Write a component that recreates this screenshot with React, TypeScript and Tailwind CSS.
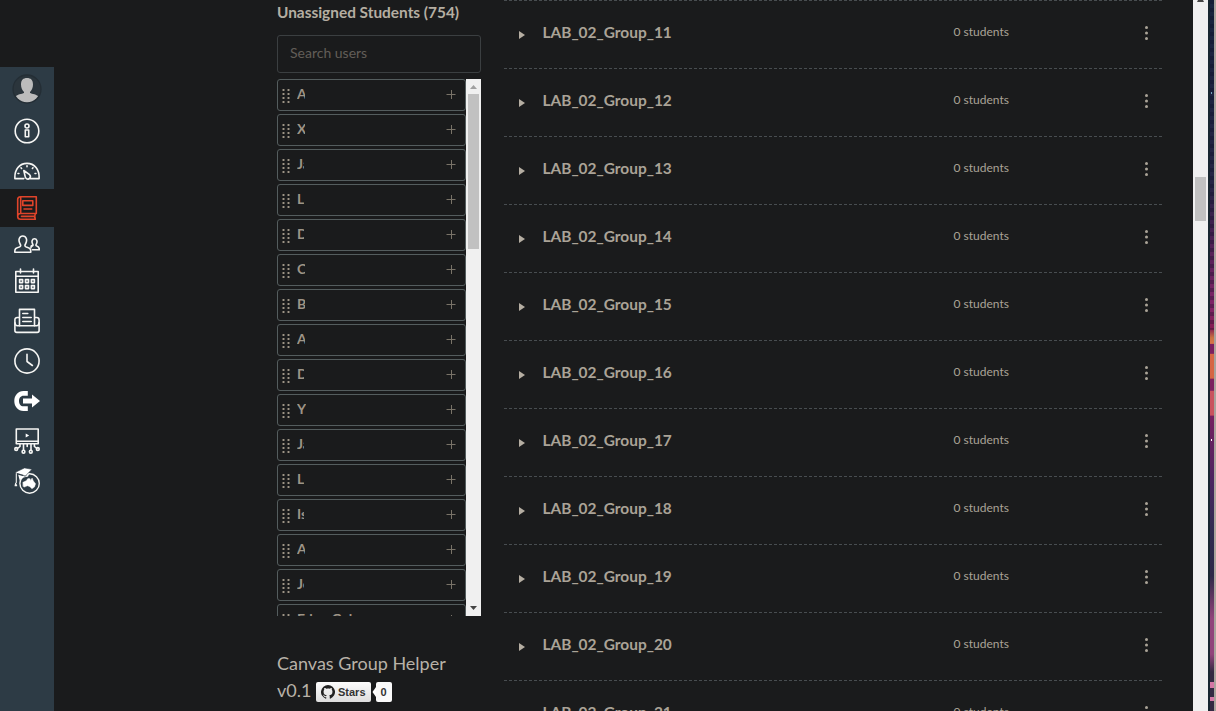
import type { ReactNode } from "react";

const students: [string, string][] = [
  ["A", "w-[8px]"], ["Xi", "w-[8px]"], ["Ja", "w-[7px]"], ["L", "w-[7px]"], ["D", "w-[7px]"],
  ["C", "w-[8px]"], ["B", "w-[8px]"], ["A", "w-[8px]"], ["D", "w-[7px]"], ["Y", "w-[9px]"],
  ["Ja", "w-[7px]"], ["L", "w-[7px]"], ["Is", "w-[7px]"], ["A", "w-[8px]"], ["Jo", "w-[7px]"],
  ["Eden Gal", "w-[58px]"],
];

const groups = [11, 12, 13, 14, 15, 16, 17, 18, 19, 20, 21];

function Icon({ children, red }: { children: ReactNode; red?: boolean }) {
  return (
    <svg
      width="26"
      height="26"
      viewBox="0 0 26 26"
      fill="none"
      strokeWidth="1.6"
      strokeLinejoin="round"
      strokeLinecap="round"
      className={red ? "block shrink-0 stroke-[#e0442a]" : "block shrink-0 stroke-[#f6f6f4]"}
    >
      {children}
    </svg>
  );
}

function Nav() {
  return (
    <nav className="mt-[67px] flex h-[644px] w-[54px] shrink-0 flex-col items-center bg-[#2d3b45]">
      <div className="flex h-[44px] items-center">
        <svg width="30" height="30" viewBox="0 0 30 30" className="block">
          <defs>
            <clipPath id="avatar"><circle cx="15" cy="15" r="13.2" /></clipPath>
          </defs>
          <circle cx="15" cy="15" r="14" fill="#2b353c" stroke="#242e35" strokeWidth="1.3" />
          <g clipPath="url(#avatar)" fill="#bcbcbc">
            <path d="M9 10.5C9 6 11.3 4 15 4s6 2 6 6.500c0 3-1.200 6-3 7.500v1c2 1 7 1.300 9 4V29H3v-6c2-2.700 7-3 9-4v-1c-1.800-1.500-3-4.500-3-7.500z" />
          </g>
        </svg>
      </div>
      <div className="flex h-[40px] items-center">
        <Icon>
          <circle cx="13" cy="13" r="11.800" />
          <circle cx="13" cy="8" r="2" />
          <path d="M11.300 12h3.400v6.800h-3.400z" />
        </Icon>
      </div>
      <div className="flex h-[38px] items-center pt-[2px]">
        <Icon>
          <path d="M9.800 20.600H.9C.4 11.500 5.500 5.400 13 5.400s12.600 6.100 12.100 15.200h-8.800" />
          <path d="M9.800 12.500l5.800 4.200c2 2-.3 5.300-3 4.100-1.500-.7-1.500-2-1.600-3z" />
          <path d="M13 7.800v1M7 9.800l.6.700M19 9.800l-.6.700M4 15.500h.9M21 15.500h.9" />
        </Icon>
      </div>
      <div className="flex h-[38px] w-full items-center justify-center bg-[#1a1b1c]">
        <Icon red>
          <path d="M22.300 18.500V1.700H6.500c-2 0-2.800 1-2.800 2.800v17c0 1.800 1 2.800 2.800 2.800h14.700M22.300 18.500H6.500c-1.700 0-2.800 1-2.800 2.500M6.700 2v16.300M7.500 21.400h13M21.300 18.700c-.8 1.800-.8 3.700 0 5.500" />
          <path d="M8.800 5.800h10v4.600h-10zM10 14h7.700" />
        </Icon>
      </div>
      <div className="flex h-[35px] items-center pb-[2px]">
        <Icon>
          <path d="M.8 21.300c-.2-3.800 1-4.300 4.500-5.300 1.600-.5 1.700-1.500.8-3-2.300-4-.7-8 2.700-8s5 4 2.700 8c-.9 1.500-.8 2.500.8 3 3.500 1 4.700 1.500 4.500 5.300z" />
          <path d="M17.700 14.500c-.7 0-.7 1.600-.7 2.300M18.500 18.700h6.800c.1-2.400-.6-3-2.500-3.600-1-.3-1.100-1-.5-2 1.500-2.600.4-5.300-1.800-5.300s-3.300 2.700-1.800 5.300c.6 1 .3 1.700-.9 2" />
        </Icon>
      </div>
      <div className="flex h-[38px] items-center">
        <Icon>
          <path d="M1.800 3.500h22.400v20.700H1.800z" />
          <path d="M2 8.200h22M6.500 1v4M19.500 1v4" />
          <path d="M5.600 11.600h3v3h-3zM11.500 11.600h3v3h-3zM17.400 11.600h3v3h-3zM5.600 17.600h3v3h-3zM11.500 17.600h3v3h-3zM17.400 17.600h3v3h-3z" />
        </Icon>
      </div>
      <div className="flex h-[42px] items-center">
        <Icon>
          <path d="M5.500 17.700V1.400h15v16.300M5.500 9.500H3.300C1.500 9.500.9 10.600.9 12v10.500c0 1.200.7 1.900 1.900 1.900h20.400c1.200 0 1.900-.7 1.900-1.900V12c0-1.400-.6-2.500-2.400-2.500h-2.200" />
          <path d="M1 14.700c0 2 .8 3 2.500 3h19c1.700 0 2.500-1 2.500-3M8.800 5.500h5M8.800 9.500h8.400M8.800 13.500h8.400" />
        </Icon>
      </div>
      <div className="flex h-[38px] items-center">
        <Icon>
          <circle cx="13" cy="13" r="12.100" />
          <path d="M13 6.300v7.200l5.400 4" />
        </Icon>
      </div>
      <div className="flex h-[42px] items-center">
        <Icon>
          <path d="M13.800 3H9.500C4 3 .3 7.500.3 13S4 23 9.500 23h4.300v-4.700H9.500C6.600 18.300 5 16 5 13s1.600-5.300 4.500-5.300h4.300z" fill="#fff" stroke="none" />
          <path d="M9 10.600h9V6.500l8 6.500-8 6.500v-4.100H9z" fill="#fff" stroke="none" />
        </Icon>
      </div>
      <div className="flex h-[38px] items-center">
        <Icon>
          <path d="M2.300 1h21.900v14.700H2.300zM2.300 13.200h21.900" />
          <path d="M11.700 5.400v4.200l3.500-2.100z" fill="#fff" stroke="none" />
          <path d="M9.500 16v6M17 16v6M13.200 16v2.500M6 16v2.500l-2.500 2M20.400 16v2.500l2.500 2" />
          <circle cx="2.200" cy="21" r="1.400" /><circle cx="9.500" cy="23.700" r="1.400" />
          <circle cx="16.800" cy="23.700" r="1.400" /><circle cx="23.800" cy="21" r="1.400" />
        </Icon>
      </div>
      <div className="flex h-[42px] items-center">
        <Icon>
          <circle cx="15.600" cy="15.500" r="9.700" strokeWidth="1.400" />
          <path d="M9 14.300l3.200-1.600 1.700-2.200 2.200.2.500 1.700 1.500-2.400 1.300 3 2.200 2.800-1.100 3.200-2.600 1.800-2-2.100-2.400-.9-3.100 1.300-1.200-.6z" fill="#fff" stroke="#fff" strokeWidth=".4" />
          <path d="M1 4.500L10.500-.1 18 1.300 11.700 7.700z" fill="#fff" stroke="#2d3b45" strokeWidth=".6" />
          <path d="M4.200 6.800l6.900 1.900 4.200-3.700-1.200 3.600-4.500 1-4 2.500z" fill="#fff" stroke="none" />
          <path d="M2.300 5.500v9M1.600 15.300l-.5 2.500h1.600z" strokeWidth="1.100" />
        </Icon>
      </div>
    </nav>
  );
}

function StudentCard({ name, width }: { name: string; width: string }) {
  return (
    <div className="flex h-[32px] w-[189px] shrink-0 items-center rounded-[3px] border border-[#545d5e] pl-[4px] pr-[9px]">
      <svg width="9" height="18" viewBox="0 0 9 18" fill="#9d9486" className="mt-[3px] shrink-0">
        {[1, 5, 9, 13].map((y) => (
          <g key={y}>
            <rect x=".5" y={y} width="2" height="2" rx=".5" />
            <rect x="5.500" y={y} width="2" height="2" rx=".5" />
          </g>
        ))}
      </svg>
      <span className={`${width} mb-[2px] ml-[6px] shrink-0 overflow-hidden whitespace-nowrap text-[14px] font-bold leading-[20px] text-[#9d9486]`}>
        {name}
      </span>
      <svg width="10" height="10" viewBox="0 0 10 10" className="mb-[2px] ml-auto shrink-0">
        <path d="M.5 5.500h9M5.500 1v9" stroke="#797368" fill="none" />
      </svg>
    </div>
  );
}

function StudentsPanel() {
  return (
    <aside className="ml-[223px] w-[204px] shrink-0">
      <h2 className="h-[35px] whitespace-nowrap pt-[2px] text-[15.400px] font-bold leading-[20px] text-[#b5aea2]">
        Unassigned Students (754)
      </h2>
      <input
        aria-label="Search users"
        placeholder="Search users"
        className="block h-[38px] w-[204px] rounded-[3px] border border-[#3b3f41] bg-transparent px-[12px] pb-[3px] text-[14px] text-[#aaa397] outline-none placeholder:text-[#625e58]"
      />
      <div className="mt-[6px] flex h-[537px] overflow-hidden">
        <div className="flex w-[189px] flex-col gap-[3px] overflow-hidden">
          {students.map(([name, width], i) => <StudentCard key={i} name={name} width={width} />)}
        </div>
        <div className="flex w-[15px] flex-col items-center bg-[#f0f0f0]">
          <svg width="15" height="15" viewBox="0 0 15 15"><path d="M4 10h7L7.500 6z" fill="#a0a0a0" /></svg>
          <div className="h-[155px] w-[11px] bg-[#c1c1c1]" />
          <svg width="15" height="15" viewBox="0 0 15 15" className="mt-auto"><path d="M4 5h7L7.500 9z" fill="#444" /></svg>
        </div>
      </div>
      <footer className="pt-[34px] text-[18px] leading-[27px] text-[#b8b2a8]">
        <div className="whitespace-nowrap">Canvas Group Helper</div>
        <div className="flex items-center">
          <span className="w-[39px]">v0.1</span>
          <a className="mt-[3px] flex h-[20px] w-[55px] items-center rounded-[2px] bg-linear-to-b from-[#fcfcfc] to-[#dddddd] pl-[5px] font-['Liberation_Sans',sans-serif] text-[11px] font-bold leading-[20px] text-[#333]">
            <svg width="14" height="14" viewBox="0 0 16 16" fill="#222" className="mr-[3px] shrink-0">
              <path d="M8 0a8 8 0 0 0-2.530 15.590c.4.070.55-.17.550-.38v-1.340c-2.230.48-2.700-1.070-2.700-1.070-.36-.92-.89-1.170-.89-1.170-.73-.5.060-.49.060-.49.8.060 1.230.83 1.230.83.71 1.220 1.870.87 2.330.66.070-.52.280-.87.510-1.070-1.780-.2-3.640-.89-3.640-3.950 0-.87.310-1.590.82-2.150-.08-.2-.36-1.020.08-2.120 0 0 .67-.21 2.200.82A7.600 7.600 0 0 1 8 3.890c.68 0 1.360.09 2 .27 1.530-1.040 2.200-.82 2.200-.82.440 1.100.160 1.920.080 2.120.51.560.82 1.270.82 2.150 0 3.070-1.870 3.750-3.650 3.950.29.250.54.730.54 1.480v2.170c0 .21.150.46.550.38A8 8 0 0 0 8 0z" />
            </svg>
            Stars
          </a>
          <svg width="5" height="10" viewBox="0 0 5 10" className="mt-[3px]"><path d="M5 0v10L1.500 5z" fill="#fff" /></svg>
          <span className="mt-[3px] h-[20px] w-[16px] rounded-[2px] bg-[#fafafa] pr-px text-center font-['Liberation_Sans',sans-serif] text-[11px] font-bold leading-[20px] text-[#333]">0</span>
        </div>
      </footer>
    </aside>
  );
}

function GroupRow({ number }: { number: number }) {
  return (
    <div className="flex h-[68px] shrink-0 items-start border-t border-dashed border-[#484d50] pl-[15px]">
      <svg width="6" height="8" viewBox="0 0 6 8" className="mt-[30px] shrink-0"><path d="M0 0v8l6-4z" fill="#b5aea2" /></svg>
      <span className="ml-[17.500px] mt-[19px] w-[411px] shrink-0 text-[15.450px] font-bold leading-[24px] text-[#aaa397]">LAB_02_Group_{number}</span>
      <span className="mt-[21px] w-[191px] shrink-0 text-[12px] leading-[20px] text-[#aaa397]">0 students</span>
      <svg width="3" height="15" viewBox="0 0 3 15" fill="#aaa397" className="mt-[25px] shrink-0">
        <circle cx="1.500" cy="1.500" r="1.500" /><circle cx="1.500" cy="7" r="1.500" /><circle cx="1.500" cy="12.500" r="1.500" />
      </svg>
    </div>
  );
}

export default function App() {
  return (
    <div className="flex h-[711px] w-[1216px] overflow-hidden bg-[#1a1b1c] font-['Lato',sans-serif]">
      <Nav />
      <StudentsPanel />
      <main className="ml-[23px] flex w-[658px] shrink-0 flex-col">
        {groups.map((n) => <GroupRow key={n} number={n} />)}
      </main>
      <div className="ml-[31px] flex w-[15px] shrink-0 flex-col items-center bg-[#f0f0f0]">
        <svg width="15" height="177" viewBox="0 0 15 177" className="shrink-0"><path d="M5 0h5l1 2H4z" fill="#444" /></svg>
        <div className="h-[44px] w-[11px] bg-[#c1c1c1]" />
      </div>
      <div className="w-[2px] shrink-0 bg-[#182630]" />
      <svg width="4" height="711" viewBox="0 0 4 711" className="shrink-0">
        <defs>
          <linearGradient id="wall" x1="0" x2="0" y1="0" y2="1">
            <stop offset="0" stopColor="#17243d" />
            <stop offset=".26" stopColor="#252344" />
            <stop offset=".33" stopColor="#472052" />
            <stop offset=".43" stopColor="#802467" />
            <stop offset=".462" stopColor="#851d52" />
            <stop offset=".475" stopColor="#c9713f" />
            <stop offset=".483" stopColor="#d97549" />
            <stop offset=".484" stopColor="#7c205f" />
            <stop offset=".497" stopColor="#7c205f" />
            <stop offset=".498" stopColor="#d66543" />
            <stop offset=".532" stopColor="#d66543" />
            <stop offset=".533" stopColor="#7c205f" />
            <stop offset=".549" stopColor="#7c205f" />
            <stop offset=".55" stopColor="#c9535e" />
            <stop offset=".584" stopColor="#c9535e" />
            <stop offset=".585" stopColor="#762060" />
            <stop offset=".68" stopColor="#4a2460" />
            <stop offset=".75" stopColor="#302b50" />
            <stop offset=".81" stopColor="#2e2848" />
            <stop offset=".87" stopColor="#91437b" />
            <stop offset=".92" stopColor="#91437b" />
            <stop offset=".945" stopColor="#342943" />
            <stop offset="1" stopColor="#342943" />
          </linearGradient>
          <pattern id="bands" width="4" height="8" patternUnits="userSpaceOnUse">
            <rect width="4" height="4" fill="#080b20" fillOpacity=".28" />
          </pattern>
        </defs>
        <rect width="4" height="711" fill="url(#wall)" />
        <rect width="4" height="330" fill="url(#bands)" />
        <rect y="682" width="4" height="6" fill="#d577a5" />
        <rect y="697" width="4" height="4" fill="#d577a5" />
        <rect x="1" y="92" width="1" height="2" fill="#77a5bd" />
        <rect x="1" y="439" width="1" height="2" fill="#fff" />
      </svg>
      <div className="w-[2px] shrink-0 bg-[#aaa49c]" />
    </div>
  );
}
